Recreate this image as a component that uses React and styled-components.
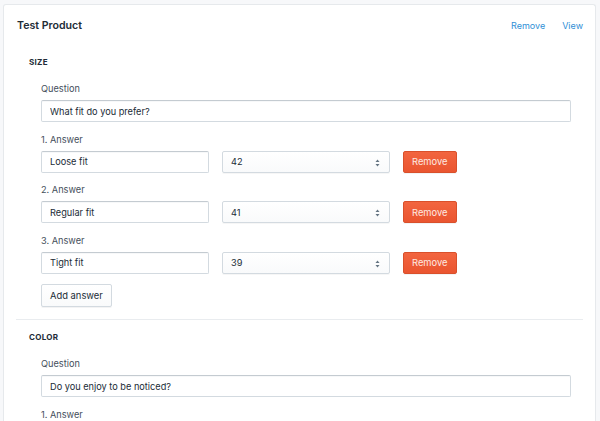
import React from "react";
import styled, { createGlobalStyle } from "styled-components";

const GlobalStyle = createGlobalStyle`
  html, body {
    margin: 0;
    padding: 0;
    background: #f7f8fa;
    font-family: Inter, "Liberation Sans", sans-serif;
    color: #212b36;
  }
`;

const Page = styled.div`
  padding: 4px 4px 0 3px;
  height: 421px;
  box-sizing: border-box;
  overflow: hidden;
`;

const Card = styled.div`
  background: #fff;
  border: 1px solid #e6e9ec;
  border-bottom: none;
  border-radius: 3px 3px 0 0;
  min-height: 440px;
`;

const CardHeader = styled.div`
  display: flex;
  align-items: center;
  justify-content: space-between;
  height: 40px;
  padding: 0 12px 0 13px;
`;

const Title = styled.h2`
  margin: 0;
  font-size: 10.6px;
  font-weight: 600;
`;

const Links = styled.div`
  display: flex;
  gap: 17px;
`;

const LinkButton = styled.a`
  color: #2f8fd6;
  font-size: 9px;
  text-decoration: none;
  cursor: pointer;
`;

const Section = styled.section`
  margin: 0 12px;
  padding: 10px 0 12px;
  border-bottom: ${(p) => (p.$divider ? "1px solid #e9ecef" : "none")};
`;

const SectionTitle = styled.h3`
  margin: 0 0 13px;
  padding-left: 13px;
  font-size: 8px;
  font-weight: 700;
  letter-spacing: 0.3px;
  text-transform: uppercase;
  line-height: 14px;
`;

const Fields = styled.div`
  display: flex;
  flex-direction: column;
  gap: 10.5px;
  padding: 0 12px 0 25px;
`;

const Field = styled.div`
  display: flex;
  flex-direction: column;
`;

const Label = styled.label`
  font-size: 9.2px;
  color: #454f5b;
  line-height: 14px;
  margin-bottom: 4px;
`;

const Input = styled.input`
  box-sizing: border-box;
  width: ${(p) => p.$width || "100%"};
  height: 22px;
  padding: 0 8px;
  border: 1px solid #d3dae0;
  border-top-color: #c4cbd1;
  border-radius: 2px;
  box-shadow: inset 0 1px 0 0 rgba(99, 115, 129, 0.05);
  font-family: inherit;
  font-size: 9.2px;
  color: #212b36;
  background: #fff;
  outline: none;
`;

const Row = styled.div`
  display: flex;
  align-items: center;
  gap: 13px;
`;

const SelectBox = styled.div`
  position: relative;
  box-sizing: border-box;
  width: 168px;
  height: 22px;
  display: flex;
  align-items: center;
  padding: 0 8px;
  border: 1px solid #d3dae0;
  border-radius: 2px;
  background: linear-gradient(#fff, #f9fafb);
  box-shadow: 0 1px 0 0 rgba(22, 29, 37, 0.04);
  font-size: 9.2px;
  color: #212b36;
`;

const Arrows = styled.svg`
  position: absolute;
  right: 9px;
  top: 7px;
`;

const Button = styled.button`
  box-sizing: border-box;
  height: ${(p) => (p.$danger ? "22px" : "23px")};
  padding: 0 8px;
  border-radius: 2px;
  font-family: inherit;
  font-size: 9.4px;
  cursor: pointer;
  border: 1px solid ${(p) => (p.$danger ? "#d9502b" : "#d3dae0")};
  color: ${(p) => (p.$danger ? "#fde9e2" : "#212b36")};
  background: ${(p) =>
    p.$danger
      ? "linear-gradient(#f2653f, #ea5530)"
      : "linear-gradient(#fff, #f9fafb)"};
  box-shadow: 0 1px 0 0 rgba(22, 29, 37, 0.05);
  align-self: flex-start;
`;

const SelectArrows = () => (
  <Arrows width="5" height="8" viewBox="0 0 5 8">
    <path d="M2.5 0.5 L4.5 3 H0.5 Z" fill="#637381" />
    <path d="M2.5 7.5 L4.5 5 H0.5 Z" fill="#637381" />
  </Arrows>
);

const AnswerRow = ({ index, text, size }) => (
  <Field>
    <Label>{index}. Answer</Label>
    <Row>
      <Input $width="168px" defaultValue={text} />
      <SelectBox>
        {size}
        <SelectArrows />
      </SelectBox>
      <Button $danger>Remove</Button>
    </Row>
  </Field>
);

const sizeAnswers = [
  { text: "Loose fit", size: "42" },
  { text: "Regular fit", size: "41" },
  { text: "Tight fit", size: "39" },
];

export default function App() {
  return (
    <Page>
      <GlobalStyle />
      <Card>
        <CardHeader>
          <Title>Test Product</Title>
          <Links>
            <LinkButton>Remove</LinkButton>
            <LinkButton>View</LinkButton>
          </Links>
        </CardHeader>

        <Section $divider>
          <SectionTitle>Size</SectionTitle>
          <Fields>
            <Field>
              <Label>Question</Label>
              <Input defaultValue="What fit do you prefer?" />
            </Field>
            {sizeAnswers.map((a, i) => (
              <AnswerRow key={i} index={i + 1} text={a.text} size={a.size} />
            ))}
            <Button>Add answer</Button>
          </Fields>
        </Section>

        <Section>
          <SectionTitle>Color</SectionTitle>
          <Fields>
            <Field>
              <Label>Question</Label>
              <Input defaultValue="Do you enjoy to be noticed?" />
            </Field>
            <Field>
              <Label>1. Answer</Label>
            </Field>
          </Fields>
        </Section>
      </Card>
    </Page>
  );
}
